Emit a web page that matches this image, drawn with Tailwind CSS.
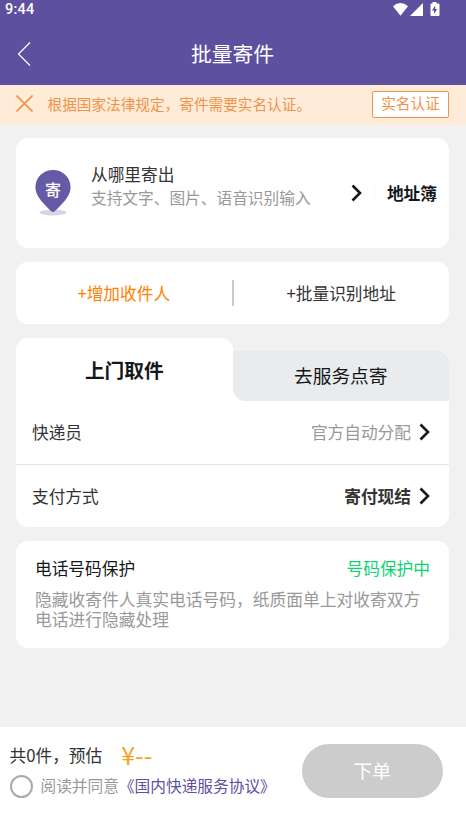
<!DOCTYPE html>
<html lang="zh-CN">
<head>
<meta charset="utf-8">
<title>批量寄件</title>
<script src="https://cdn.jsdelivr.net/npm/@tailwindcss/browser@4"></script>
</head>
<body class="bg-[#f1f1f1] font-['Noto_Sans_CJK_SC',sans-serif] text-[16.7px] leading-5 text-[#333]">
<div class="flex h-[829px] w-[466px] flex-col overflow-hidden whitespace-nowrap">
  <header class="flex h-[85px] shrink-0 flex-col bg-[#5d509f] text-white">
    <div class="flex h-5 items-center pl-[5px] pr-[26px]">
      <span class="font-[Roboto,sans-serif] text-[14.5px] font-medium tracking-[0.2px]">9:44</span>
      <svg class="ml-auto" width="48" height="20" viewBox="0 0 48 20" fill="#fff">
        <path d="M1 6.2Q8.500 0 16 6.200L8.500 15.800Z"/>
        <path d="M31 3V16H18Z"/>
        <path fill-rule="evenodd" d="M40.500 2h4v1.500h2q1 0 1 1V15q0 1-1 1h-7q-1 0-1-1V4.500q0-1 1-1h1ZM43.200 5.500l-3.200 5h2v3.500l3.200-5h-2Z"/>
      </svg>
    </div>
    <div class="grid h-[65px] grid-cols-[80px_1fr_80px] items-center">
      <svg class="ml-[17px] mt-[3px]" width="14" height="24" viewBox="0 0 14 24" fill="none" stroke="#fff" stroke-width="1.2"><path d="M13 .5 1.500 12 13 23.500"/></svg>
      <h1 class="-ml-px text-center text-[20.8px]">批量寄件</h1>
    </div>
  </header>

  <section class="flex h-10 shrink-0 items-center bg-[#ffecd8] pl-4 pr-[17px] text-[14.65px] text-[#f0924a]">
    <svg class="-mt-[3px]" width="17" height="17" viewBox="0 0 17 17" fill="none" stroke="#f0924a" stroke-width="1.6"><path d="M.5.5l16 16M16.500.5l-16 16"/></svg>
    <span class="-mt-[2px] ml-[14.500px]">根据国家法律规定，寄件需要实名认证。</span>
    <span class="-mt-[2px] ml-auto flex h-[27px] w-[77px] items-center justify-center rounded-[2px] border border-[#f0924a] bg-white pb-[2px]">实名认证</span>
  </section>

  <main class="flex flex-1 flex-col gap-[14px] pl-4 pr-[17px] pt-[13px]">
    <section class="flex h-[110px] items-center rounded-xl bg-white pl-[19px] pr-3">
      <svg width="36" height="48" viewBox="0 0 36 48">
        <ellipse cx="18" cy="43.500" rx="13.500" ry="3" fill="#d8d4e8"/>
        <path d="M18 1C8 1 .4 8.500.4 18.500.4 28 11 37 16 42q2 1.700 4 0C25 37 35.600 28 35.600 18.500 35.600 8.500 28 1 18 1Z" fill="#655aa6"/>
        <text x="18" y="27" text-anchor="middle" font-size="16" font-weight="500" fill="#fff">寄</text>
      </svg>
      <div class="-mt-[15px] ml-5">
        <p class="h-6 leading-6">从哪里寄出</p>
        <p class="h-6 text-[15.7px] leading-6 text-[#999]">支持文字、图片、语音识别输入</p>
      </div>
      <svg class="ml-auto" width="12" height="18" viewBox="0 0 12 18" fill="none" stroke="#15181b" stroke-width="2.600"><path d="M1.500 1.500 9 9l-7.500 7.500"/></svg>
      <div class="ml-[11px] h-6 w-px bg-[#fafafa]"></div>
      <span class="ml-3 font-bold text-[#15181b]">地址簿</span>
    </section>

    <section class="flex h-[62px] items-center rounded-xl bg-white">
      <span class="flex-1 text-center text-[#ff8000]">+增加收件人</span>
      <div class="h-[26px] w-[2px] bg-[#ccc]"></div>
      <span class="flex-1 text-center">+批量识别地址</span>
    </section>

    <section class="h-[189px]">
      <div class="flex h-[63px] items-end">
        <div class="flex h-[63px] w-[216.500px] items-center justify-center rounded-t-xl bg-white text-[19.7px] font-bold text-[#15181b]">上门取件</div>
        <div class="h-[50px] flex-1 rounded-tr-xl bg-white">
          <div class="flex h-full items-center justify-center rounded-bl-xl rounded-tr-xl bg-[#eaebed] pb-[2px] text-[18.7px] text-[#15181b]">去服务点寄</div>
        </div>
      </div>
      <div class="rounded-b-xl bg-white">
        <div class="flex h-16 items-center border-b border-[#e4e4e4] pb-px pl-4 pr-[18px]">
          <span>快递员</span>
          <span class="ml-auto text-[#999]">官方自动分配</span>
          <svg class="ml-2" width="12" height="18" viewBox="0 0 12 18" fill="none" stroke="#15181b" stroke-width="2.600"><path d="M1.500 1.500 9 9l-7.500 7.500"/></svg>
        </div>
        <div class="flex h-[62px] items-center pl-4 pr-[18px]">
          <span>支付方式</span>
          <span class="ml-auto font-bold">寄付现结</span>
          <svg class="ml-2" width="12" height="18" viewBox="0 0 12 18" fill="none" stroke="#15181b" stroke-width="2.600"><path d="M1.500 1.500 9 9l-7.500 7.500"/></svg>
        </div>
      </div>
    </section>

    <section class="h-[107px] rounded-xl bg-white pl-[19px] pr-[19px] pt-[17px]">
      <div class="flex justify-between">
        <span class="text-[#15181b]">电话号码保护</span>
        <span class="text-[#0bd470]">号码保护中</span>
      </div>
      <p class="mt-[11px] text-[16.75px] text-[#999]">隐藏收寄件人真实电话号码，纸质面单上对收寄双方<br>电话进行隐藏处理</p>
    </section>
  </main>

  <footer class="flex h-[102px] shrink-0 justify-between bg-white pl-[9.500px] pr-[23px] pt-4">
    <div>
      <div class="flex h-6 items-center">
        <span>共0件，预估</span>
        <span class="-mt-[2px] ml-[19px] text-[25px] text-[#f2a427]">¥--</span>
      </div>
      <div class="mt-[7px] flex h-6 items-center text-[15.7px]">
        <span class="size-[23px] rounded-full border-2 border-[#aaa]"></span>
        <span class="ml-2 text-[#999]">阅读并同意</span>
        <span class="text-[#5d509f]">《国内快递服务协议》</span>
      </div>
    </div>
    <button class="mt-px h-[54px] w-[141.500px] rounded-full bg-[#ccc] pb-[2px] text-[18.7px] text-white">下单</button>
  </footer>
</div>
</body>
</html>
